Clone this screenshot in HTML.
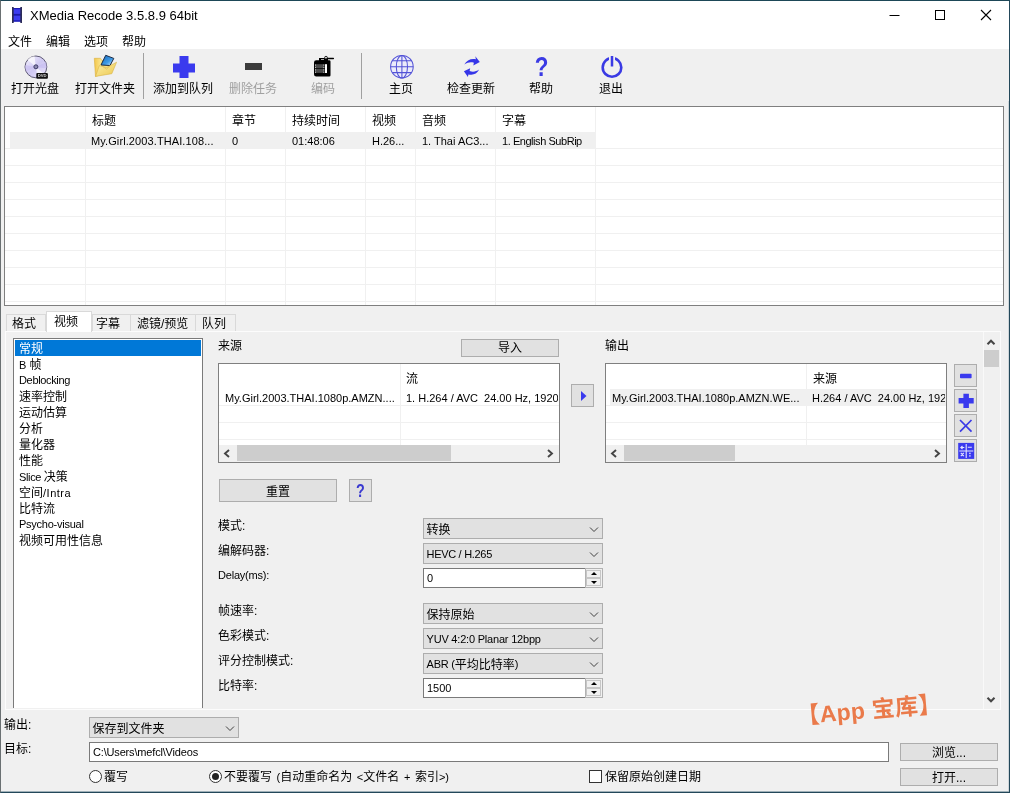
<!DOCTYPE html>
<html lang="zh-CN">
<head>
<meta charset="utf-8">
<title>XMedia Recode 3.5.8.9 64bit</title>
<style>
*{box-sizing:border-box;margin:0;padding:0}
html,body{width:1010px;height:793px;overflow:hidden;background:#f0f0f0}
body{font-family:"Liberation Sans","Noto Sans CJK SC",sans-serif;font-size:12px;color:#000;position:relative}
.abs{position:absolute}
.t{position:absolute;white-space:nowrap;line-height:16px}
#win{position:absolute;left:0;top:0;width:1010px;height:793px;border-left:1px solid #6a7072;border-top:1px solid #1d4757;border-right:1px solid #23485a;border-bottom:1px solid #23485a;box-shadow:inset 0 -1px 0 #9fb0b8,inset -1px 0 0 #cfd6da;background:#f0f0f0}
#title{position:absolute;left:1px;top:1px;width:1008px;height:30px;background:#fff}
#menu{position:absolute;left:1px;top:31px;width:1008px;height:18px;background:#fff}
#toolbar{position:absolute;left:1px;top:49px;width:1008px;height:52px;background:#f0f0f0}
.tb{position:absolute;top:81px;width:80px;text-align:center;font-size:12px;line-height:16px;white-space:nowrap}
.dis{color:#a0a0a0}
.lv{position:absolute;background:#fff;border:1px solid #7f7f7f}
.btn{position:absolute;background:#e1e1e1;border:1px solid #adadad;text-align:center;font-size:12px;white-space:nowrap}
.combo{position:absolute;background:#e1e1e1;border:1px solid #adadad;height:21px;font-size:11px;line-height:21px;padding-left:2.5px;white-space:nowrap}
.combo svg{position:absolute;right:3px;top:7.5px}
.edit{position:absolute;background:#fff;border:1px solid #7a7a7a;height:20px;font-size:11px;line-height:18px;padding-left:3px;white-space:nowrap}
.s11{font-size:11px}
.hl{left:0;width:100%;height:1px;background:#f0f0f0}
.vl{top:0;width:1px;height:100%;background:#f0f0f0}
.tab{background:#f0f0f0;border:1px solid #d9d9d9;border-bottom:none}
.tabsel{background:#fff;border:1px solid #d9d9d9;border-bottom:none}
.sbh{background:#f0f0f0}
.thumb{background:#cdcdcd}
.radio{width:13px;height:13px;border-radius:50%;border:1px solid #333;background:#fff}
.spin{position:absolute;width:18px;height:20px;border:1px solid #b2b2b2;background:#f0f0f0}
.spin i,.spin b{position:absolute;left:0;width:15px;height:8px;background:#f0f0f0;border:1px solid #c6c6c6}
.spin i{top:1px}.spin b{top:9px}
.spin i:after,.spin b:after{content:"";position:absolute;left:4px;border:3px solid transparent}
.spin i:after{top:1px;border-bottom-color:#000;border-top:none}
.spin b:after{top:2px;border-top-color:#000;border-bottom:none}
</style>
</head>
<body>
<div id="root" style="position:absolute;left:0;top:0;width:1010px;height:793px;will-change:transform;transform:translateZ(0)">
<div id="win"></div>
<div id="title"></div>
<div id="menu"></div>
<div id="toolbar"></div>

<!-- title bar -->
<svg class="abs" style="left:12px;top:7px" width="10" height="16" viewBox="0 0 10 16"><rect x="1" y="1" width="8" height="13.600" fill="#3c3cf0"/><rect x="1" y="1" width="8" height="1.200" fill="#1c1cae"/><rect x="1" y="6.900" width="8" height="1.800" fill="#1a1aa8"/><rect x="1" y="13.300" width="8" height="1.300" fill="#1c1cae"/><rect x="0" y="0" width="1.700" height="16" fill="#2c2c58"/><rect x="8.300" y="0" width="1.700" height="16" fill="#2c2c58"/></svg>
<div class="t" id="ttl" style="left:30px;top:8px;font-size:13px">XMedia Recode 3.5.8.9 64bit</div>
<svg class="abs" style="left:880px;top:1px" width="130" height="30" viewBox="0 0 130 30"><path d="M9.5 14.5h10" stroke="#000" stroke-width="1" fill="none"/><rect x="55.5" y="9.500" width="9" height="9" stroke="#000" stroke-width="1" fill="none"/><path d="M101 9l10 10M111 9l-10 10" stroke="#000" stroke-width="1.1" fill="none"/></svg>

<!-- menu -->
<div class="t" style="left:8px;top:34px">文件</div>
<div class="t" style="left:46px;top:34px">编辑</div>
<div class="t" style="left:84px;top:34px">选项</div>
<div class="t" style="left:122px;top:34px">帮助</div>

<!-- toolbar labels -->
<div class="tb" style="left:-5px">打开光盘</div>
<div class="tb" style="left:65px">打开文件夹</div>
<div class="tb" style="left:143px">添加到队列</div>
<div class="tb dis" style="left:213px">删除任务</div>
<div class="tb dis" style="left:283px">编码</div>
<div class="tb" style="left:361px">主页</div>
<div class="tb" style="left:431px">检查更新</div>
<div class="tb" style="left:501px">帮助</div>
<div class="tb" style="left:571px">退出</div>
<div class="abs" style="left:143px;top:53px;width:1px;height:46px;background:#a0a0a0"></div>
<div class="abs" style="left:361px;top:53px;width:1px;height:46px;background:#a0a0a0"></div>

<!-- toolbar icons -->
<svg class="abs" style="left:18px;top:50px" width="36" height="32" viewBox="0 0 36 32">
<defs><linearGradient id="dg" x1="0" y1="0" x2="1" y2="1"><stop offset="0" stop-color="#f6f4ff"/><stop offset=".5" stop-color="#cfc8f2"/><stop offset="1" stop-color="#ece8fc"/></linearGradient></defs>
<circle cx="17.900" cy="16.900" r="10.900" fill="url(#dg)" stroke="#5e5a74" stroke-width="1"/>
<path d="M17.900 16.900L9.500 9.700A10.900 10.900 0 0 1 16.500 6.100Z" fill="#fff" opacity=".7"/>
<path d="M17.900 16.900L26.300 24.100A10.900 10.900 0 0 1 19.500 27.700Z" fill="#fff" opacity=".7"/>
<path d="M17.900 16.900L7.200 15A10.900 10.900 0 0 0 8 21.500Z" fill="#c4baf0" opacity=".6"/>
<path d="M17.900 16.900L28.600 18.500A10.900 10.900 0 0 0 27.800 12.300Z" fill="#c4baf0" opacity=".6"/>
<circle cx="17.900" cy="16.800" r="2" fill="#8d8ab0" stroke="#3c3a68" stroke-width="1"/>
<rect x="18.300" y="23" width="11.600" height="5.700" rx="1" fill="#111"/>
<text x="24.100" y="27.400" font-family="Liberation Sans,sans-serif" font-size="4.200" font-weight="bold" fill="#d8d8d8" text-anchor="middle">DVD</text>
</svg>
<svg class="abs" style="left:88px;top:50px" width="36" height="32" viewBox="0 0 36 32">
<defs><linearGradient id="fg" x1="0" y1="0" x2="1" y2="1"><stop offset="0" stop-color="#fdf0a8"/><stop offset="1" stop-color="#ecc850"/></linearGradient>
<linearGradient id="fb" x1="0" y1="0" x2="1" y2="0"><stop offset="0" stop-color="#f3c64a"/><stop offset=".4" stop-color="#fae58e"/><stop offset="1" stop-color="#f6da78"/></linearGradient>
<linearGradient id="fl" x1="0" y1="0" x2="1" y2="1"><stop offset="0" stop-color="#1565b8"/><stop offset=".6" stop-color="#3f9be6"/><stop offset="1" stop-color="#d8efff"/></linearGradient></defs>
<path d="M6.300 8.300h6.200l1.400 2.200h9v10l-15.400 6z" fill="url(#fb)" stroke="#d8ae3c" stroke-width=".6"/>
<path d="M13 15L17.700 5.300L25.800 8.400L22 15.500Z" fill="url(#fl)" stroke="#1a2a44" stroke-width="1"/>
<path d="M7.500 26.400L11.300 15.600L18.500 17.600L28.600 12.200L23.800 23.700Z" fill="url(#fg)" stroke="#d9b347" stroke-width=".6"/>
<path d="M15 16.700L18.500 19.200L22.500 15.600" fill="none" stroke="#d9b85a" stroke-width=".6"/>
</svg>
<svg class="abs" style="left:172px;top:55px" width="24" height="24" viewBox="0 0 24 24"><path d="M7.500 1h9v7.500h6.500v9h-6.500v5.500h-9v-5.500h-6.500v-9h6.500z" fill="#3a3aee"/></svg>
<div class="abs" style="left:245px;top:63px;width:17px;height:7px;background:#3c3c3c"></div>
<svg class="abs" style="left:312px;top:54px" width="24" height="24" viewBox="0 0 24 24">
<path d="M7 4h9v2.300h1.200a1.300 1.300 0 0 1 1.300 1.300v13.600a1.300 1.300 0 0 1-1.300 1.300h-13a2.200 2.200 0 0 1-2.200-2.200v-11.800a2.200 2.200 0 0 1 2.200-2.200h2.800z" fill="#000"/>
<rect x="3" y="10.200" width="9.400" height="4" fill="#4a4a4a"/><rect x="3" y="14.900" width="9.400" height="4" fill="#4a4a4a"/>
<rect x="13" y="10.200" width="2" height="8.800" fill="#fff"/>
<path d="M3.500 10.500v8.500M11.800 10.500v8.500" stroke="#ddd" stroke-width=".8" stroke-dasharray="1.200 1.200"/>
<circle cx="14" cy="3.700" r="1.400" fill="#ddd" stroke="#000" stroke-width=".8"/>
<path d="M15.400 4.500h6" stroke="#000" stroke-width="1.300" stroke-linecap="round"/>
<rect x="9" y="5" width="3" height="1" fill="#aaa"/>
</svg>
<svg class="abs" style="left:388px;top:53px" width="28" height="28" viewBox="0 0 28 28">
<g fill="none" stroke="#5252d6" stroke-width="1.050"><circle cx="13.900" cy="13.700" r="11.300" fill="#ebebfa"/><ellipse cx="13.900" cy="13.700" rx="5.600" ry="11.300"/><path d="M13.900 2.400v22.600M2.600 13.700h22.600M4.300 7.800h19.200M4.300 19.600h19.200"/></g>
</svg>
<svg class="abs" style="left:455px;top:50px" width="36" height="32" viewBox="0 0 36 32">
<path d="M9.300 14.600C11.500 10 16 8.300 20.900 9.200L20.300 6.300L24.800 12.100L18.300 15.500L18.900 12.700C15.500 11.700 12.500 12.400 9.300 14.600Z" fill="#3636e8"/>
<path d="M24.200 19.600C21.800 24.200 18 25.500 13.400 24.400L12.900 27L8.900 21.200L15.200 18.200L14.600 21.100C18 22.200 21 21.700 24.200 19.600Z" fill="#3636e8"/>
</svg>
<div class="t" style="left:533px;top:52px;width:17px;text-align:center;font-size:28px;line-height:30px;font-weight:bold;color:#3a3ae4;transform:scaleX(.8)">?</div>
<svg class="abs" style="left:598px;top:53px" width="28" height="28" viewBox="0 0 28 28"><circle cx="14" cy="14.400" r="9.300" fill="none" stroke="#3a3ae4" stroke-width="2.600"/><path d="M14 1.500v12" stroke="#f0f0f0" stroke-width="6"/><path d="M14 3v10.500" stroke="#3a3ae4" stroke-width="2.500"/></svg>
<!-- main list -->
<div class="lv" style="left:4px;top:106px;width:1000px;height:200px"></div>
<div class="abs" id="grid1" style="left:5px;top:107px;width:998px;height:198px;overflow:hidden">
  <div class="abs" style="left:5px;top:25px;width:586px;height:17px;background:#f0f0f0"></div>
  <div class="abs hl" style="top:41px"></div><div class="abs hl" style="top:58px"></div><div class="abs hl" style="top:75px"></div><div class="abs hl" style="top:92px"></div><div class="abs hl" style="top:109px"></div><div class="abs hl" style="top:126px"></div><div class="abs hl" style="top:143px"></div><div class="abs hl" style="top:160px"></div><div class="abs hl" style="top:177px"></div><div class="abs hl" style="top:194px"></div>
  <div class="abs vl" style="left:80px"></div><div class="abs vl" style="left:220px"></div><div class="abs vl" style="left:280px"></div><div class="abs vl" style="left:360px"></div><div class="abs vl" style="left:410px"></div><div class="abs vl" style="left:490px"></div><div class="abs vl" style="left:590px"></div>
</div>
<div class="t" style="left:92px;top:113px">标题</div>
<div class="t" style="left:232px;top:113px">章节</div>
<div class="t" style="left:292px;top:113px">持续时间</div>
<div class="t" style="left:372px;top:113px">视频</div>
<div class="t" style="left:422px;top:113px">音频</div>
<div class="t" style="left:502px;top:113px">字幕</div>
<div class="t s11" style="left:91px;top:133px;letter-spacing:.1px">My.Girl.2003.THAI.108...</div>
<div class="t s11" style="left:232px;top:133px">0</div>
<div class="t s11" style="left:292px;top:133px">01:48:06</div>
<div class="t s11" style="left:372px;top:133px">H.26...</div>
<div class="t s11" style="left:422px;top:133px">1. Thai AC3...</div>
<div class="t s11" style="left:502px;top:133px;letter-spacing:-.45px">1. English SubRip</div>

<!-- tabs -->
<div class="abs" id="pane" style="left:5px;top:331px;width:996px;height:379px;border:1px solid #fcfcfc;background:#f0f0f0"></div>
<div class="abs tab" style="left:6px;top:314px;width:40px;height:17px"></div>
<div class="abs tab" style="left:92px;top:314px;width:39px;height:17px"></div>
<div class="abs tab" style="left:130px;top:314px;width:66px;height:17px"></div>
<div class="abs tab" style="left:195px;top:314px;width:41px;height:17px"></div>
<div class="abs tabsel" style="left:46px;top:311px;width:46px;height:21px"></div>
<div class="t" style="left:12px;top:316px">格式</div>
<div class="t" style="left:54px;top:314px">视频</div>
<div class="t" style="left:96px;top:316px">字幕</div>
<div class="t" style="left:137px;top:316px">滤镜/预览</div>
<div class="t" style="left:202px;top:316px">队列</div>

<!-- left listbox -->
<div class="abs" style="left:13px;top:338px;width:190px;height:370px;background:#fff;border:1px solid #7a7a7a;border-bottom:none"></div>
<div class="abs" style="left:15px;top:340px;width:186px;height:16px;background:#0078d7"></div>
<div class="t" style="left:19px;top:341px;color:#fff">常规</div>
<div class="t" style="left:19px;top:357px"><span class="s11">B </span>帧</div>
<div class="t s11" style="left:19px;top:372px;letter-spacing:-.34px">Deblocking</div>
<div class="t" style="left:19px;top:389px">速率控制</div>
<div class="t" style="left:19px;top:405px">运动估算</div>
<div class="t" style="left:19px;top:421px">分析</div>
<div class="t" style="left:19px;top:437px">量化器</div>
<div class="t" style="left:19px;top:453px">性能</div>
<div class="t" style="left:19px;top:469px"><span class="s11" style="letter-spacing:-.35px">Slice </span>决策</div>
<div class="t" style="left:19px;top:485px">空间<span class="s11" style="letter-spacing:.5px">/Intra</span></div>
<div class="t" style="left:19px;top:501px">比特流</div>
<div class="t s11" style="left:19px;top:516px;letter-spacing:-.25px">Psycho-visual</div>
<div class="t" style="left:19px;top:533px">视频可用性信息</div>

<!-- source -->
<div class="t" style="left:218px;top:338px">来源</div>
<div class="btn" style="left:461px;top:339px;width:98px;height:18px;line-height:16px">导入</div>
<div class="lv" style="left:218px;top:363px;width:342px;height:100px"></div>
<div class="abs" style="left:219px;top:364px;width:340px;height:81px;overflow:hidden">
  <div class="abs hl" style="top:41px"></div><div class="abs hl" style="top:58px"></div><div class="abs hl" style="top:75px"></div>
  <div class="abs vl" style="left:181px"></div>
</div>
<div class="t" style="left:406px;top:371px">流</div>
<div class="t s11" style="left:225px;top:390px">My.Girl.2003.THAI.1080p.AMZN....</div>
<div class="t s11" style="left:406px;top:390px;width:152px;overflow:hidden;white-space:pre">1. H.264 / AVC  24.00 Hz, 1920x1080</div>
<div class="abs sbh" style="left:219px;top:445px;width:340px;height:17px"><div class="abs thumb" style="left:18px;top:0;width:214px;height:16px"></div>
<svg class="abs" style="left:4px;top:3.500px" width="8" height="9" viewBox="0 0 8 9"><path d="M6 1L2 4.500L6 8" stroke="#454545" stroke-width="1.9" fill="none"/></svg>
<svg class="abs" style="right:5px;top:3.500px" width="8" height="9" viewBox="0 0 8 9"><path d="M2 1L6 4.500L2 8" stroke="#454545" stroke-width="1.9" fill="none"/></svg></div>

<div class="btn" style="left:571px;top:384px;width:23px;height:23px"><svg class="abs" style="left:9px;top:6px" width="6" height="10" viewBox="0 0 6 10"><path d="M0 0L5.500 5L0 10Z" fill="#3a3aee"/></svg></div>

<!-- output -->
<div class="t" style="left:605px;top:338px">输出</div>
<div class="lv" style="left:605px;top:363px;width:342px;height:100px"></div>
<div class="abs" style="left:606px;top:364px;width:340px;height:81px;overflow:hidden">
  <div class="abs" style="left:4px;top:25px;width:336px;height:17px;background:#f0f0f0"></div>
  <div class="abs hl" style="top:41px"></div><div class="abs hl" style="top:58px"></div><div class="abs hl" style="top:75px"></div>
  <div class="abs vl" style="left:200px"></div>
</div>
<div class="t" style="left:813px;top:371px">来源</div>
<div class="t s11" style="left:612px;top:390px">My.Girl.2003.THAI.1080p.AMZN.WE...</div>
<div class="t s11" style="left:812px;top:390px;width:133px;overflow:hidden;white-space:pre">H.264 / AVC  24.00 Hz, 1920x1080</div>
<div class="abs sbh" style="left:606px;top:445px;width:340px;height:17px"><div class="abs thumb" style="left:18px;top:0;width:111px;height:16px"></div>
<svg class="abs" style="left:4px;top:3.500px" width="8" height="9" viewBox="0 0 8 9"><path d="M6 1L2 4.500L6 8" stroke="#454545" stroke-width="1.9" fill="none"/></svg>
<svg class="abs" style="right:5px;top:3.500px" width="8" height="9" viewBox="0 0 8 9"><path d="M2 1L6 4.500L2 8" stroke="#454545" stroke-width="1.9" fill="none"/></svg></div>

<!-- side buttons -->
<div class="btn" style="left:954px;top:364px;width:23px;height:23px"><svg class="abs" style="left:0;top:0" width="21" height="21" viewBox="0 0 21 21"><rect x="5" y="8.700" width="11.600" height="4.600" rx=".8" fill="#3a3aee"/></svg></div>
<div class="btn" style="left:954px;top:389px;width:23px;height:23px"><svg class="abs" style="left:0;top:0" width="21" height="21" viewBox="0 0 21 21"><path d="M8.400 3.800h5.500v4.300h4.800v5.500h-4.800v4.300h-5.500v-4.300h-4.800v-5.500h4.800z" fill="#3a3aee"/></svg></div>
<div class="btn" style="left:954px;top:414px;width:23px;height:23px"><svg class="abs" style="left:0;top:0" width="21" height="21" viewBox="0 0 21 21"><path d="M5 5l11.500 11.700M16.500 5l-11.500 11.700" stroke="#3a3ae6" stroke-width="1.700" fill="none"/></svg></div>
<div class="btn" style="left:954px;top:439px;width:23px;height:23px"><svg class="abs" style="left:0;top:0" width="21" height="21" viewBox="0 0 21 21"><rect x="3.200" y="2.900" width="16" height="16" fill="#3a3aee"/><path d="M11.200 4v14M4.300 11h14" stroke="#e4e4ff" stroke-width="1.100"/><path d="M5.300 7.500h4M6 7.500l1.500-1.500M6 7.500l1.500 1.500M12.800 7.300h4M5.800 12.800l3 3.400M8.800 12.800l-3 3.400" stroke="#e4e4ff" stroke-width="1.100" fill="none"/><rect x="14.200" y="12.700" width="1.400" height="1.400" fill="#e4e4ff"/><rect x="14.200" y="15.200" width="1.400" height="1.400" fill="#e4e4ff"/></svg></div>

<!-- vertical scrollbar -->
<div class="abs" style="left:983px;top:332px;width:17px;height:377px;background:#f0f0f0;border-left:1px solid #f9f9f9"></div>
<div class="abs thumb" style="left:984px;top:350px;width:15px;height:17px"></div>
<svg class="abs" style="left:986px;top:338px" width="10" height="8" viewBox="0 0 10 8"><path d="M1.500 6.300L5 2.700L8.500 6.300" stroke="#454545" stroke-width="2" fill="none"/></svg>
<svg class="abs" style="left:986px;top:696px" width="10" height="8" viewBox="0 0 10 8"><path d="M1.500 1.700L5 5.300L8.500 1.700" stroke="#454545" stroke-width="2" fill="none"/></svg>

<!-- reset -->
<div class="btn" style="left:219px;top:479px;width:118px;height:23px;line-height:24px">重置</div>
<div class="btn" style="left:349px;top:479px;width:23px;height:23px;line-height:22px;color:#3a3ad0;font-weight:bold;font-size:18px"><span style="display:inline-block;transform:scaleX(.8)">?</span></div>

<!-- form -->
<div class="t" style="left:218px;top:518px">模式:</div>
<div class="t" style="left:218px;top:543px">编解码器:</div>
<div class="t s11" style="left:218px;top:567px;letter-spacing:-.2px">Delay(ms):</div>
<div class="t" style="left:218px;top:603px">帧速率:</div>
<div class="t" style="left:218px;top:628px">色彩模式:</div>
<div class="t" style="left:218px;top:653px">评分控制模式:</div>
<div class="t" style="left:218px;top:678px">比特率:</div>

<div class="combo" style="left:423px;top:518px;width:180px;font-size:12px;line-height:23px">转换<svg width="10" height="6" viewBox="0 0 10 6"><path d="M1 .5L5 4.500L9 .5" stroke="#404040" stroke-width="1" fill="none"/></svg></div>
<div class="combo" style="left:423px;top:543px;width:180px;letter-spacing:-.3px">HEVC / H.265<svg width="10" height="6" viewBox="0 0 10 6"><path d="M1 .5L5 4.500L9 .5" stroke="#404040" stroke-width="1" fill="none"/></svg></div>
<div class="edit" style="left:423px;top:568px;width:162px;border-right:none">0</div>
<div class="combo" style="left:423px;top:603px;width:180px;font-size:12px;line-height:23px">保持原始<svg width="10" height="6" viewBox="0 0 10 6"><path d="M1 .5L5 4.500L9 .5" stroke="#404040" stroke-width="1" fill="none"/></svg></div>
<div class="combo" style="left:423px;top:628px;width:180px;letter-spacing:-.2px">YUV 4:2:0 Planar 12bpp<svg width="10" height="6" viewBox="0 0 10 6"><path d="M1 .5L5 4.500L9 .5" stroke="#404040" stroke-width="1" fill="none"/></svg></div>
<div class="combo" style="left:423px;top:653px;width:180px;letter-spacing:-.2px">ABR (<span style="font-size:12px;letter-spacing:0;position:relative;top:1px">平均比特率</span>)<svg width="10" height="6" viewBox="0 0 10 6"><path d="M1 .5L5 4.500L9 .5" stroke="#404040" stroke-width="1" fill="none"/></svg></div>
<div class="edit" style="left:423px;top:678px;width:162px;border-right:none">1500</div>
<div class="spin" style="left:585px;top:568px"><i></i><b></b></div>
<div class="spin" style="left:585px;top:678px"><i></i><b></b></div>

<!-- bottom -->
<div class="t" style="left:4px;top:717px">输出:</div>
<div class="t" style="left:4px;top:741px">目标:</div>
<div class="combo" style="left:89px;top:717px;width:150px;font-size:12px;line-height:23px">保存到文件夹<svg width="10" height="6" viewBox="0 0 10 6"><path d="M1 .5L5 4.500L9 .5" stroke="#404040" stroke-width="1" fill="none"/></svg></div>
<div class="edit" style="left:89px;top:742px;width:800px;letter-spacing:-.17px">C:\Users\mefcl\Videos</div>
<div class="btn" style="left:900px;top:743px;width:98px;height:18px;line-height:18px">浏览...</div>
<div class="btn" style="left:900px;top:768px;width:98px;height:18px;line-height:18px">打开...</div>
<div class="abs radio" style="left:89px;top:770px"></div>
<div class="t" style="left:104px;top:769px">覆写</div>
<div class="abs radio" style="left:209px;top:770px"><div class="abs" style="left:2px;top:2px;width:7px;height:7px;border-radius:50%;background:#222"></div></div>
<div class="t" style="left:224px;top:769px;word-spacing:1.25px">不要覆写 <span class="s11">(</span>自动重命名为 <span class="s11">&lt;</span>文件名 <span class="s11">+</span> 索引<span class="s11">&gt;)</span></div>
<div class="abs" style="left:589px;top:770px;width:13px;height:13px;border:1px solid #333;background:#fff"></div>
<div class="t" style="left:605px;top:769px">保留原始创建日期</div>

<!-- watermark -->
<div class="t" style="left:869px;top:710px;font-size:23px;line-height:28px;color:#ea7a4a;font-weight:700;letter-spacing:.3px;transform:translate(-50%,-50%) rotate(-5deg)">【App 宝库】</div>



</div>
</body>
</html>
